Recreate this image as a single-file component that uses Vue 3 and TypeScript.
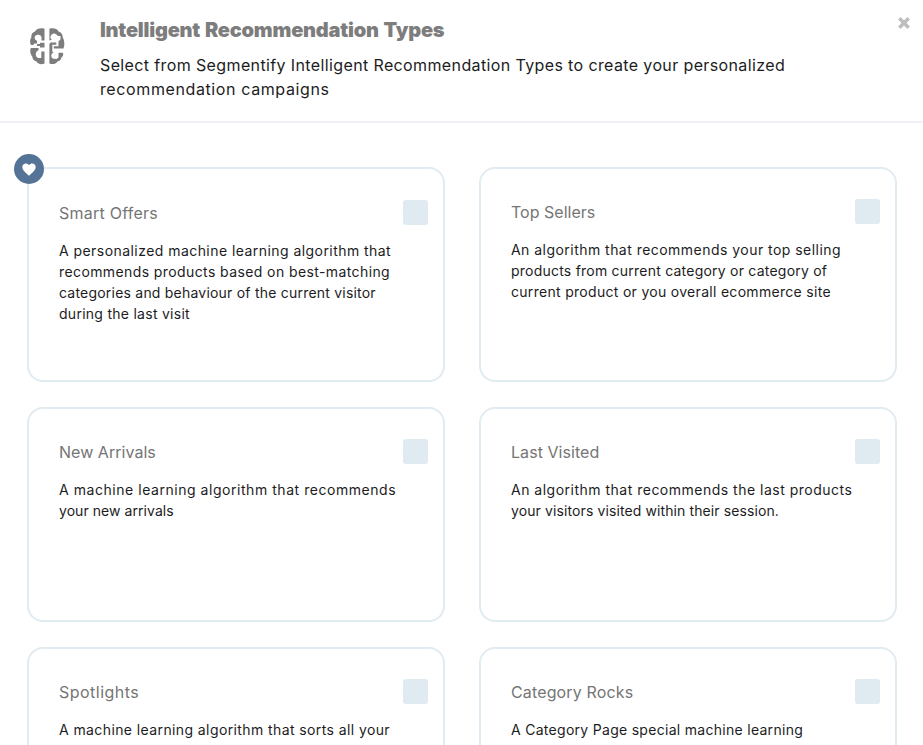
<script setup lang="ts">
interface Line {
  text: string
  tracking: number
}

interface RecommendationType {
  title: Line
  lines: Line[]
  favourite?: boolean
}

const line = (text: string, tracking: number): Line => ({ text, tracking })

const intro: Line[] = [
  line('Select from Segmentify Intelligent Recommendation Types to create your personalized', 0.376),
  line('recommendation campaigns', 0.61),
]

const types: RecommendationType[] = [
  {
    title: line('Smart Offers', 0.24),
    favourite: true,
    lines: [
      line('A personalized machine learning algorithm that', 0.445),
      line('recommends products based on best-matching', 0.4),
      line('categories and behaviour of the current visitor', 0.214),
      line('during the last visit', 0.27),
    ],
  },
  {
    title: line('Top Sellers', 0.02),
    lines: [
      line('An algorithm that recommends your top selling', 0.465),
      line('products from current category or category of', 0.225),
      line('current product or you overall ecommerce site', 0.298),
    ],
  },
  {
    title: line('New Arrivals', 0.04),
    lines: [
      line('A machine learning algorithm that recommends', 0.545),
      line('your new arrivals', 0.06),
    ],
  },
  {
    title: line('Last Visited', 0.06),
    lines: [
      line('An algorithm that recommends the last products', 0.495),
      line('your visitors visited within their session.', 0.105),
    ],
  },
  {
    title: line('Spotlights', 0.48),
    lines: [line('A machine learning algorithm that sorts all your', 0.4)],
  },
  {
    title: line('Category Rocks', 0.14),
    lines: [line('A Category Page special machine learning', 0.29)],
  },
]

const spacing = (l: Line) => ({ letterSpacing: `${l.tracking}px` })
</script>

<template>
  <div class="modal">
    <header class="header">
      <svg class="brain" viewBox="0 0 35 37" aria-hidden="true">
        <g fill="#7d7d7d">
          <path d="M14.500 .8V12.500H11.500V11A3.200 3.200 0 1 0 4.600 9.500C4.600 11 5.500 12.300 7 12.700V15.500H4.500L3 17H1C-.3 14.500-.3 11.500 1.300 9.500 1 6.500 2.600 4 5 3.500 6.500.5 11-.3 14.500.8Z" />
          <path d="M10 14.800H14.500V19.600H10V18H7V16H10Z" />
          <path d="M.8 20H8.500V22.200C6.500 23 5.800 24.500 5.800 26.500 6 29.500 8 30.500 11.300 30V23.500H14.500V35.500C11.500 37 8 36 6.500 33.500 3.800 33 2.400 31 2.300 28.500.3 26.500-.3 23 .8 20Z" />
          <path d="M19.400 .8C23 -.3 27 .5 28.600 3.400 31.200 4.200 32.900 6.500 32.700 9.500 34.600 12 34.800 17.500 33.500 20.500H23.800V18.300H28.500V13.300L30.500 11.500V8H28L26.500 6.500A3.400 3.400 0 0 0 21.800 11.800L19.400 12.500Z" />
          <path d="M20.500 14.500H26.300V16.800H22.300V23.500L23.500 24.500A3.500 3.500 0 0 0 22.500 30.500L26.500 31 28.500 29.500V24.700H33C33.500 27 33 28.300 31.700 29 31.200 31.800 29.700 33 27.500 33.500 25.800 36 22.500 36.800 19.400 35.500V16Z" />
        </g>
      </svg>
      <div class="heading">
        <h1>Intelligent Recommendation Types</h1>
        <p class="intro">
          <span v-for="l in intro" :key="l.text" class="line" :style="spacing(l)">{{ l.text }}</span>
        </p>
      </div>
      <button class="close" type="button" aria-label="Close">
        <svg viewBox="0 0 12 12">
          <path d="M2 2L10 10M10 2L2 10" />
        </svg>
      </button>
    </header>
    <main class="grid">
      <article v-for="t in types" :key="t.title.text" class="card" :class="{ favourite: t.favourite }">
        <span v-if="t.favourite" class="badge">
          <svg viewBox="0 0 14 13">
            <path d="M7 12.800C5 10.500.3 7.800.3 4 .3.3 5-.9 7 2.200 9-.9 13.700.3 13.700 4 13.700 7.800 9 10.500 7 12.800Z" />
          </svg>
        </span>
        <div class="text">
          <h2 :style="spacing(t.title)">{{ t.title.text }}</h2>
          <p class="description">
            <span v-for="l in t.lines" :key="l.text" class="line" :style="spacing(l)">{{ l.text }}</span>
          </p>
        </div>
        <span class="checkbox" role="checkbox" aria-checked="false"></span>
      </article>
    </main>
  </div>
</template>

<style>
body {
  margin: 0;
  overflow: hidden;
  background: #fff;
}
</style>

<style scoped>
.modal {
  height: 745px;
  overflow: hidden;
  box-sizing: border-box;
  background: #fff;
  font-family: Inter, 'Open Sans', sans-serif;
  color: #1c1c1e;
}
.header {
  display: flex;
  align-items: flex-start;
  box-sizing: border-box;
  height: 123px;
  padding: 16px 12px 0 30px;
  border-bottom: 2px solid #f0f0f6;
}
.brain {
  flex: none;
  width: 35px;
  height: 37px;
  margin-top: 12px;
}
.heading {
  flex: 1;
  margin-left: 35px;
}
h1 {
  margin: 0;
  font-size: 20px;
  line-height: 28px;
  font-weight: 900;
  letter-spacing: -0.22px;
  word-spacing: 1px;
  color: #7d7d7d;
}
.intro {
  margin: 9px 0 0;
  font-size: 16px;
  line-height: 24px;
}
.line {
  display: block;
  white-space: nowrap;
}
.close {
  flex: none;
  width: 14px;
  height: 14px;
  padding: 0;
  border: 0;
  background: none;
}
.close svg {
  display: block;
  width: 14px;
  height: 14px;
}
.close path {
  stroke: #bdbdbd;
  stroke-width: 3;
}
.grid {
  display: grid;
  grid-template-columns: 418px 418px;
  grid-auto-rows: 215px;
  gap: 25px 34px;
  padding: 44.400px 26px 0 27px;
}
.card {
  position: relative;
  display: flex;
  justify-content: space-between;
  box-sizing: border-box;
  padding: 30px 15px 0 30px;
  border: 2px solid #e1ebf2;
  border-radius: 16px;
}
.favourite {
  padding-top: 31px;
}
.text {
  padding-top: 1px;
}
h2 {
  margin: 0;
  font-size: 16px;
  line-height: 24px;
  font-weight: 400;
  color: #757575;
  white-space: nowrap;
}
.description {
  margin: 15px 0 0;
  font-size: 14px;
  line-height: 21px;
}
.checkbox {
  flex: none;
  width: 25px;
  height: 25px;
  border-radius: 3px;
  background: #e0ebf1;
}
.badge {
  position: absolute;
  top: -15px;
  left: -15px;
  display: grid;
  place-items: center;
  width: 30px;
  height: 30px;
  border-radius: 50%;
  background: #557396;
}
.badge svg {
  width: 14px;
  height: 13px;
  margin-top: 1px;
  fill: #fff;
}
</style>
